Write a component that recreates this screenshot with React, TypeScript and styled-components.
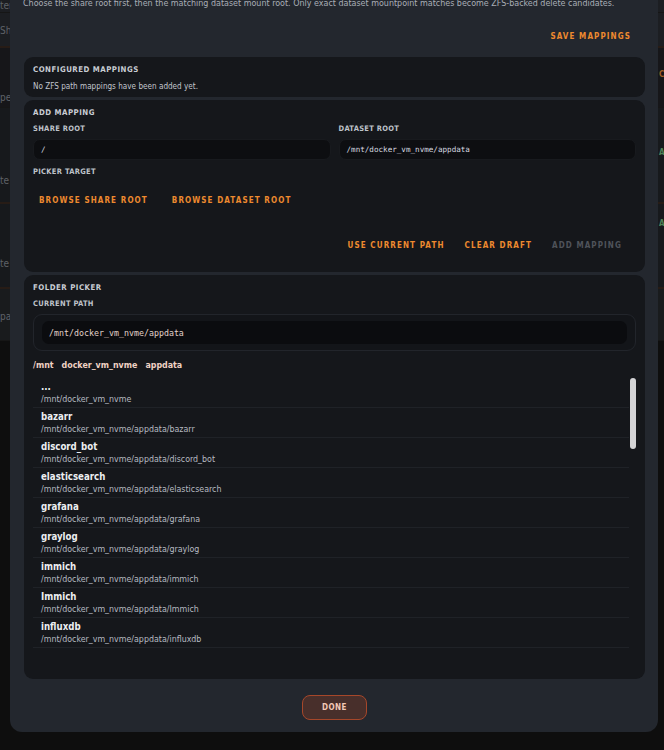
import React from 'react';
import styled, { createGlobalStyle } from 'styled-components';

const GlobalStyle = createGlobalStyle`
  html, body {
    margin: 0;
    padding: 0;
    background: #111111;
    overflow: hidden;
  }
  body {
    font-family: "DejaVu Sans Condensed", "Liberation Sans", sans-serif;
    color: #d6d9de;
  }
  * {
    box-sizing: border-box;
  }
`;

const BgPage = styled.div`
  width: 664px;
  height: 750px;
  overflow: hidden;
  background: #111111;
  font-size: 10px;
`;

const BgRow = styled.div<{ $h: number; $bg: string; $line?: boolean }>`
  display: grid;
  grid-template-columns: 659px 60px;
  height: ${(p) => p.$h}px;
  background: ${(p) => p.$bg};
  border-bottom: ${(p) => (p.$line ? '2px solid #2e211b' : '1px solid #1a1a1a')};
  color: #6f737a;
  white-space: nowrap;
`;

const BgText = styled.span<{ $top: number }>`
  margin-top: ${(p) => p.$top}px;
  line-height: 12px;
`;

const BgTag = styled.span<{ $color: string; $top: number }>`
  margin-top: ${(p) => p.$top}px;
  line-height: 12px;
  color: ${(p) => p.$color};
  font-weight: 700;
  font-size: 8px;
  letter-spacing: 1px;
`;

const Backdrop = styled.div`
  position: fixed;
  inset: 0;
  background: rgba(0, 0, 0, 0.15);
`;

const Modal = styled.div`
  position: fixed;
  left: 10px;
  right: 6px;
  top: -20px;
  bottom: 18px;
  background: #23272e;
  border-radius: 12px;
  padding: 14px 13px 13px 14px;
  display: flex;
  flex-direction: column;
`;

const Intro = styled.p`
  margin: 1px 0 -1px -1px;
  font-size: 8.9px;
  line-height: 16px;
  color: #a9aeb6;
  white-space: nowrap;
`;

const SaveRow = styled.div`
  display: flex;
  justify-content: flex-end;
  margin: 16px 0 11px;
  padding-right: 8px;
`;

const TextButton = styled.button<{ $disabled?: boolean }>`
  background: none;
  border: none;
  height: 20px;
  padding: 0 6px;
  font-family: inherit;
  font-size: 8px;
  font-weight: 700;
  letter-spacing: 1.1px;
  text-transform: uppercase;
  color: ${(p) => (p.$disabled ? '#4f535a' : '#ee8a2f')};
  cursor: pointer;
`;

const Card = styled.section<{ $pb?: number }>`
  background: #15171b;
  border-radius: 9px;
  padding: 7px 9px ${(p) => p.$pb ?? 5}px;
  margin-bottom: 3px;
`;

const CardTitle = styled.h3`
  margin: 0;
  font-size: 7.8px;
  line-height: 12px;
  font-weight: 700;
  letter-spacing: 0.5px;
  text-transform: uppercase;
  color: #c9cdd4;
`;

const Label = styled.div<{ $mt?: number }>`
  margin-top: ${(p) => p.$mt ?? 4}px;
  font-size: 7.5px;
  line-height: 12px;
  font-weight: 700;
  letter-spacing: 0.3px;
  text-transform: uppercase;
  color: #bfc3ca;
`;

const Muted = styled.p`
  margin: 4px 0 0;
  font-size: 8.1px;
  line-height: 12px;
  color: #c2c6cd;
`;

const FieldGrid = styled.div`
  display: grid;
  grid-template-columns: 1fr 1fr;
  column-gap: 8px;
`;

const Field = styled.div`
  display: flex;
  flex-direction: column;
`;

const PathInput = styled.div`
  margin-top: 4px;
  height: 21px;
  display: flex;
  align-items: center;
  padding: 0 7px;
  background: #0d0e11;
  border-radius: 7px;
  border: 1px solid #181a1e;
  font-family: "DejaVu Sans Mono", "Liberation Mono", monospace;
  font-size: 7.6px;
  color: #d9dbe0;
`;

const ButtonRow = styled.div<{ $end?: boolean; $gap: number; $mt: number }>`
  display: flex;
  justify-content: ${(p) => (p.$end ? 'flex-end' : 'flex-start')};
  gap: ${(p) => p.$gap}px;
  margin-top: ${(p) => p.$mt}px;
  padding-right: ${(p) => (p.$end ? 8 : 0)}px;
`;

const PathBox = styled.div`
  margin-top: 4px;
  padding: 6px 8px;
  border: 1px solid #22252b;
  border-radius: 9px;
  background: #131519;
`;

const CurrentPath = styled.div`
  height: 23px;
  display: flex;
  align-items: center;
  padding: 0 7px;
  background: #0b0c0f;
  border-radius: 7px;
  font-family: "DejaVu Sans Mono", "Liberation Mono", monospace;
  font-size: 8.3px;
  color: #e1d2ca;
`;

const Crumbs = styled.nav`
  display: flex;
  gap: 8px;
  margin-top: 8px;
  height: 12px;
  align-items: center;
`;

const Crumb = styled.span`
  font-size: 8.8px;
  font-weight: 700;
  color: #f0d2c4;
`;

const ListFrame = styled.div`
  display: flex;
  margin-top: 7px;
  height: 270px;
`;

const FolderList = styled.ul`
  flex: 1;
  list-style: none;
  margin: 0;
  padding: 0;
  overflow: hidden;
`;

const ScrollTrack = styled.div`
  width: 7px;
  padding-left: 1px;
`;

const ScrollThumb = styled.div`
  height: 71px;
  border-radius: 3px;
  background: #d4d4d6;
`;

const FolderRow = styled.li`
  padding: 3px 8px 2px;
  border-bottom: 1px solid #1f2227;
`;

const FolderName = styled.div`
  font-size: 9.6px;
  line-height: 12px;
  font-weight: 700;
  color: #eceef1;
`;

const FolderPath = styled.div`
  font-size: 8.8px;
  line-height: 12px;
  color: #b7bbc2;
`;

const Footer = styled.div`
  display: flex;
  justify-content: center;
  margin-top: 13px;
`;

const DoneButton = styled.button`
  width: 65px;
  height: 25px;
  background: #482f2b;
  border: 1.5px solid #a6472a;
  border-radius: 8px;
  font-family: inherit;
  font-size: 8px;
  font-weight: 700;
  letter-spacing: 0.5px;
  color: #f2c9b6;
  cursor: pointer;
`;

const base = '/mnt/docker_vm_nvme/appdata';
const folders = [
  'bazarr', 'discord_bot', 'elasticsearch', 'grafana', 'graylog', 'immich', 'Immich', 'influxdb',
  'jellyfin', 'jellyseerr', 'lidarr', 'loki', 'mariadb', 'minio', 'mosquitto', 'nextcloud',
  'nginx', 'overseerr', 'paperless', 'plex', 'portainer', 'postgres', 'prometheus', 'prowlarr',
  'qbittorrent', 'radarr', 'redis', 'sabnzbd', 'sonarr', 'syncthing', 'tautulli', 'traefik', 'unifi',
];

const bgRows = [
  { h: 13, bg: '#222428', text: 'ter', textTop: 0, tag: '', tagTop: 0 },
  { h: 35, bg: '#222428', text: 'Show all', textTop: 12, tag: '', tagTop: 0, line: true },
  { h: 60, bg: '#1a1b1e', text: 'pending', textTop: 44, tag: 'CLEAR', tagTop: 21, color: '#c0702c' },
  { h: 96, bg: '#1c1e21', text: 'te candidates', textTop: 67, tag: 'ACTIVE', tagTop: 39, color: '#5f9a6a', line: true },
  { h: 85, bg: '#1c1e21', text: 'te candidates', textTop: 54, tag: 'ACTIVE', tagTop: 14, color: '#5f9a6a', line: true },
  { h: 52, bg: '#1e2023', text: 'path', textTop: 22, tag: '', tagTop: 0 },
];

const App = () => {
  return (
    <>
      <GlobalStyle />
      <BgPage>
        {bgRows.map((r, i) => (
          <BgRow key={i} $h={r.h} $bg={r.bg} $line={r.line}>
            <BgText $top={r.textTop}>{r.text}</BgText>
            {r.tag ? (
              <BgTag $color={r.color || '#888'} $top={r.tagTop}>
                {r.tag}
              </BgTag>
            ) : (
              <span />
            )}
          </BgRow>
        ))}
      </BgPage>
      <Backdrop />
      <Modal>
        <Intro>
          Choose the share root first, then the matching dataset mount root. Only exact dataset
          mountpoint matches become ZFS-backed delete candidates.
        </Intro>
        <SaveRow>
          <TextButton>Save mappings</TextButton>
        </SaveRow>

        <Card>
          <CardTitle>Configured mappings</CardTitle>
          <Muted>No ZFS path mappings have been added yet.</Muted>
        </Card>

        <Card $pb={17}>
          <CardTitle>Add mapping</CardTitle>
          <FieldGrid>
            <Field>
              <Label>Share root</Label>
              <PathInput>/</PathInput>
            </Field>
            <Field>
              <Label>Dataset root</Label>
              <PathInput>{base}</PathInput>
            </Field>
          </FieldGrid>
          <Label $mt={6}>Picker target</Label>
          <ButtonRow $gap={12} $mt={12}>
            <TextButton>Browse share root</TextButton>
            <TextButton>Browse dataset root</TextButton>
          </ButtonRow>
          <ButtonRow $end $gap={8} $mt={25}>
            <TextButton>Use current path</TextButton>
            <TextButton>Clear draft</TextButton>
            <TextButton $disabled>Add mapping</TextButton>
          </ButtonRow>
        </Card>

        <Card $pb={31}>
          <CardTitle>Folder picker</CardTitle>
          <Label>Current path</Label>
          <PathBox>
            <CurrentPath>{base}</CurrentPath>
          </PathBox>
          <Crumbs>
            <Crumb>/mnt</Crumb>
            <Crumb>docker_vm_nvme</Crumb>
            <Crumb>appdata</Crumb>
          </Crumbs>
          <ListFrame>
            <FolderList>
              <FolderRow>
                <FolderName>...</FolderName>
                <FolderPath>/mnt/docker_vm_nvme</FolderPath>
              </FolderRow>
              {folders.map((f) => (
                <FolderRow key={f}>
                  <FolderName>{f}</FolderName>
                  <FolderPath>
                    {base}/{f}
                  </FolderPath>
                </FolderRow>
              ))}
            </FolderList>
            <ScrollTrack>
              <ScrollThumb />
            </ScrollTrack>
          </ListFrame>
        </Card>

        <Footer>
          <DoneButton>DONE</DoneButton>
        </Footer>
      </Modal>
    </>
  );
};

export default App;
